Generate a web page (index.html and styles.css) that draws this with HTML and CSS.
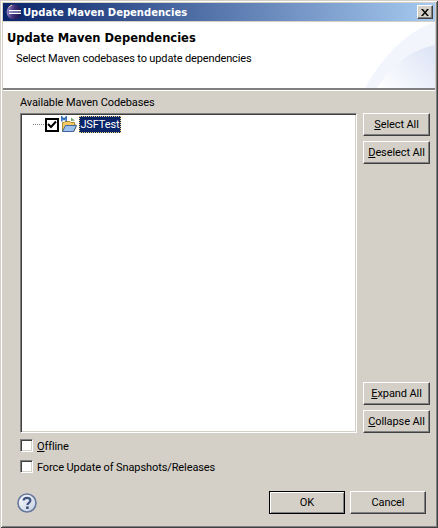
FILE: index.html
```html
<!DOCTYPE html>
<html lang="en">
<head>
<meta charset="utf-8">
<title>Update Maven Dependencies</title>
<link rel="stylesheet" href="styles.css">
</head>
<body>
<div class="window">
  <div class="titlebar">
    <svg class="app-icon" width="16" height="16" viewBox="0 0 16 16">
      <defs>
        <linearGradient id="ec" x1="0" y1="0" x2="1" y2="0.2"><stop offset="0" stop-color="#a898d8"/><stop offset=".55" stop-color="#3f3078"/><stop offset="1" stop-color="#1c1850"/></linearGradient>
      </defs>
      <circle cx="8" cy="8" r="7.5" fill="url(#ec)"/>
      <path d="M3 6.5H15M3 9.5H15" stroke="#fff" stroke-width="1.1"/>
      <path d="M3 8H15" stroke="#b9bde0" stroke-width="1"/>
      <path d="M2.5 3.5A7 7 0 0 1 6 1.2" stroke="#e9c8a8" stroke-width="1" fill="none"/>
    </svg>
    <span class="title-text">Update Maven Dependencies</span>
    <button class="close-btn" aria-label="Close">
      <svg width="8" height="7" viewBox="0 0 8 7"><path d="M0 0L2 0L4 2.4L6 0L8 0L5 3.5L8 7L6 7L4 4.6L2 7L0 7L3 3.5Z" fill="#000"/></svg>
    </button>
  </div>
  <header class="banner">
    <svg class="swoosh" width="80" height="66" viewBox="0 0 80 66">
      <defs><linearGradient id="sw" x1="0" y1="1" x2="1" y2="0.3"><stop offset="0" stop-color="#fff"/><stop offset="1" stop-color="#dfe6f6"/></linearGradient></defs>
      <path d="M10 66C30 30 55 8 80 0V66Z" fill="#eef2fb" opacity=".75"/>
      <path d="M22 66C35 45 55 28 80 23V66Z" fill="url(#sw)"/>
    </svg>
    <h1 class="banner-title">Update Maven Dependencies</h1>
    <p class="banner-text">Select Maven codebases to update dependencies</p>
  </header>
  <main class="content">
    <div class="group-label">Available Maven Codebases</div>
    <div class="tree-row">
      <div class="tree">
        <div class="tree-item">
          <span class="tree-line"></span>
          <span class="tree-check">
            <svg width="10" height="9" viewBox="0 0 10 9"><path d="M1 4L4 7L9 1.5" fill="none" stroke="#000" stroke-width="2"/></svg>
          </span>
          <svg class="folder" width="16" height="17" viewBox="0 0 16 17">
            <path d="M1.5 15.5V6.5H3L4 5.5H9L10 6.5H13.5V9H15V11L13 15.5Z" fill="#f4c860" stroke="#a98a35"/>
            <path d="M1.5 15.5L4.5 9.5H15.5L12.5 15.5Z" fill="#9cc0ec" stroke="#44689c"/>
            <path d="M0.8 5.5V1L3 3.6L5.2 1V5.5" fill="none" stroke="#2d6bb4" stroke-width="1.5"/>
            <path d="M10 1.5L14 4.5L10 5Z" fill="#3d7a40" opacity=".7"/>
          </svg>
          <span class="tree-label">JSFTest</span>
        </div>
      </div>
      <div class="side-buttons">
        <button class="btn side-btn"><span class="u">S</span>elect All</button>
        <button class="btn side-btn"><span class="u">D</span>eselect All</button>
        <span class="spacer"></span>
        <button class="btn side-btn"><span class="u">E</span>xpand All</button>
        <button class="btn side-btn"><span class="u">C</span>ollapse All</button>
      </div>
    </div>
    <div class="options">
      <label class="option"><span class="check"></span><span class="option-text"><span class="u">O</span>ffline</span></label>
      <label class="option"><span class="check"></span><span class="option-text">Force Update of Snapshots/Releases</span></label>
    </div>
    <div class="footer">
      <svg class="help" width="20" height="20" viewBox="0 0 20 20">
        <defs><linearGradient id="hb" x1="0" y1="0" x2="1" y2="1"><stop offset="0" stop-color="#fbfcfe"/><stop offset="1" stop-color="#c4cfe2"/></linearGradient></defs>
        <circle cx="10" cy="10" r="9" fill="url(#hb)" stroke="#66799c" stroke-width="1.6"/>
        <path d="M6.6 7.6C6.6 5.6 8.2 4.8 10 4.8C12 4.8 13.4 5.9 13.4 7.6C13.4 9.8 10.4 9.9 10.4 12" fill="none" stroke="#3f5480" stroke-width="2.2"/>
        <rect x="9.1" y="13.4" width="2.6" height="2.6" fill="#3f5480"/>
      </svg>
      <div class="footer-buttons">
        <button class="btn dlg-btn default">OK</button>
        <button class="btn dlg-btn">Cancel</button>
      </div>
    </div>
  </main>
</div>
</body>
</html>
```
FILE: styles.css
```css
* { box-sizing: border-box; }
html, body { margin: 0; padding: 0; }
body {
  width: 438px;
  height: 528px;
  font-family: Roboto, "Liberation Sans", Arial, sans-serif;
  font-size: 11px;
  letter-spacing: -0.1px;
  color: #000;
  overflow: hidden;
}
.window {
  width: 438px;
  height: 528px;
  display: flex;
  flex-direction: column;
  background: #d4d0c8;
  padding: 3px;
  box-shadow: inset 1px 1px 0 #d4d0c8, inset -1px -1px 0 #404040, inset 2px 2px 0 #fff, inset -2px -2px 0 #808080;
}
.titlebar {
  height: 18px;
  flex: none;
  display: flex;
  align-items: center;
  padding: 0 2px 0 3px;
  background: linear-gradient(90deg, #0a246a, #a6caf0);
  color: #fff;
}
.app-icon { flex: none; margin-right: 1px; }
.title-text { flex: 1; font-family: "DejaVu Sans", sans-serif; font-size: 10px; font-weight: 700; letter-spacing: 0; }
.close-btn {
  width: 16px;
  height: 14px;
  padding: 0;
  display: flex;
  align-items: center;
  justify-content: center;
  background: #d4d0c8;
  border: 1px solid;
  border-color: #fff #404040 #404040 #fff;
  box-shadow: inset -1px -1px 0 #808080;
}
.banner {
  flex: none;
  position: relative;
  height: 68px;
  margin-top: 1px;
  padding: 8px 0 0 4px;
  background: #fff;
  border-bottom: 2px solid #808080;
  box-shadow: 0 1px 0 #fff;
  overflow: hidden;
}
.swoosh { position: absolute; right: 0; top: 0; }
.banner-title { position: relative; margin: 0; font-family: "DejaVu Sans", sans-serif; font-size: 11.5px; line-height: 16px; font-weight: 700; letter-spacing: 0; }
.banner-text { position: relative; margin: 6px 0 0 9px; line-height: 14px; letter-spacing: -0.14px; }
.content {
  flex: 1;
  min-height: 0;
  display: flex;
  flex-direction: column;
  padding: 0 5px 0 17px;
}
.group-label { margin-top: 6px; height: 17px; line-height: 13px; }
.tree-row { height: 320px; flex: none; display: flex; gap: 6px; }
.tree {
  width: 337px;
  background: #fff;
  border: 1px solid;
  border-color: #808080 #fff #fff #808080;
  box-shadow: inset 1px 1px 0 #404040, inset -1px -1px 0 #d4d0c8;
  padding: 2px 0 0 12px;
}
.tree-item { display: flex; align-items: center; height: 17px; }
.tree-line { width: 11px; border-top: 1px dotted #808080; }
.tree-check {
  width: 14px;
  height: 14px;
  margin-left: 1px;
  border: 2px solid #000;
  display: flex;
  align-items: center;
  justify-content: center;
  background: #fff;
}
.folder { margin: 0 2px 0 2px; flex: none; }
.tree-label {
  width: 42px;
  height: 17px;
  line-height: 15px;
  text-align: center;
  color: #fff;
  background: #0a246a;
  border: 1px dotted #f0d070;
}
.side-buttons { width: 67px; display: flex; flex-direction: column; gap: 5px; }
.spacer { flex: 1; }
.btn {
  font: inherit;
  letter-spacing: inherit;
  color: #000;
  padding: 0;
  background: #d4d0c8;
  border: 1px solid;
  border-color: #fff #404040 #404040 #fff;
  box-shadow: inset -1px -1px 0 #808080;
}
.side-btn { height: 23px; }
.u { text-decoration: underline; }
.options { margin-top: 6px; display: flex; flex-direction: column; gap: 8px; }
.option { display: flex; align-items: center; gap: 4px; height: 13px; }
.option-text { padding-top: 1px; }
.check {
  width: 13px;
  height: 13px;
  flex: none;
  background: #fff;
  border: 1px solid;
  border-color: #808080 #fff #fff #808080;
  box-shadow: inset 1px 1px 0 #404040, inset -1px -1px 0 #d4d0c8;
}
.footer { margin-top: 18px; display: flex; align-items: center; justify-content: space-between; margin-left: -3px; }
.help { flex: none; }
.footer-buttons { display: flex; gap: 5px; margin-right: 4px; }
.dlg-btn { width: 76px; height: 23px; }
.dlg-btn.default { border-color: #000; box-shadow: inset 1px 1px 0 #fff, inset -1px -1px 0 #808080; }
```
